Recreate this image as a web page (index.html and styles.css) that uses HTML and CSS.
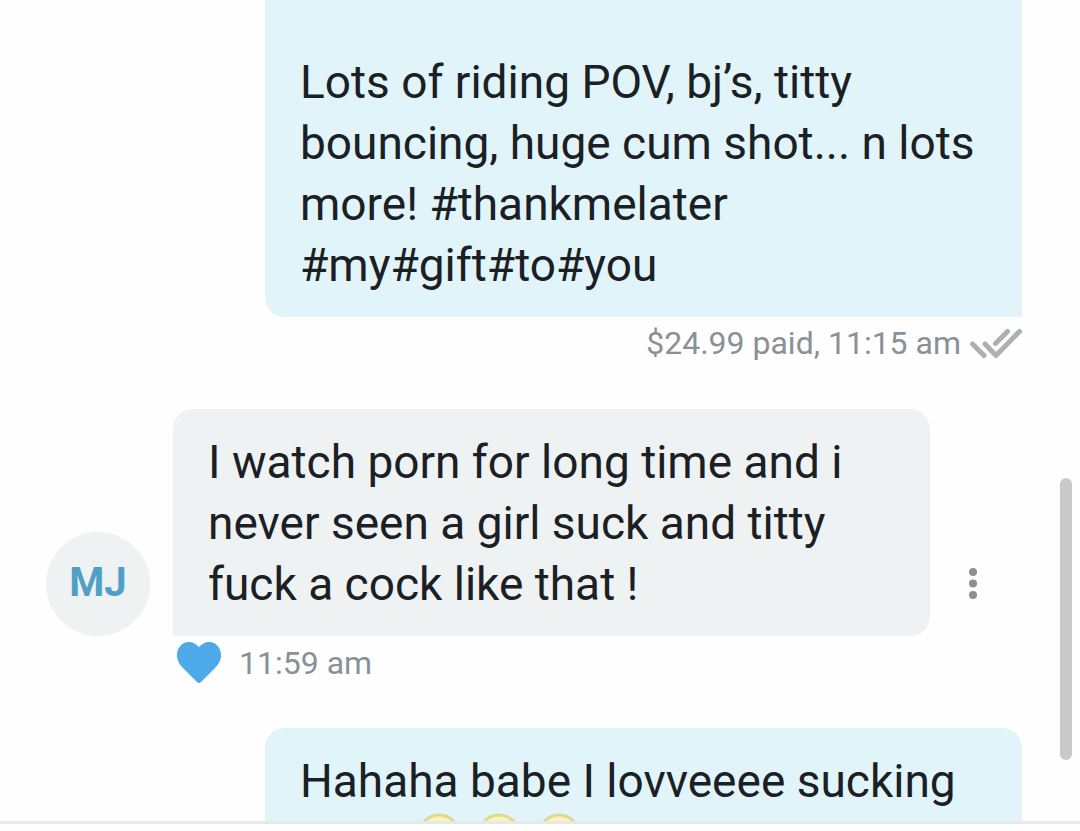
FILE: index.html
```
<!DOCTYPE html>
<html lang="en">
<head>
    <meta charset="UTF-8">
    <meta name="viewport" content="width=device-width, initial-scale=1.0">
    <title>Messages</title>
    <link rel="stylesheet" href="styles.css">
</head>
<body>
    <main class="chat">
        <div class="message message-out">
            <p class="bubble bubble-out bubble-continued">Lots of riding POV, bj’s, titty<br>bouncing, huge cum shot... n lots<br>more! #thankmelater<br>#my#gift#to#you</p>
            <div class="meta">
                <span>$24.99 paid, 11:15 am</span>
                <svg class="checks" viewBox="0 0 52 30" aria-label="Read">
                    <path d="M2.500 16l11.500 11.500M15 16l11 11.500L49.500 3.500M25.500 15.500L37.500 3.500"/>
                </svg>
            </div>
        </div>

        <div class="message message-in">
            <div class="row">
                <div class="avatar">MJ</div>
                <p class="bubble bubble-in">I watch porn for long time and i<br>never seen a girl suck and titty<br>fuck a cock like that !</p>
                <button class="more" type="button" aria-label="More options">
                    <svg viewBox="0 0 10 32">
                        <circle cx="5" cy="4" r="4"/>
                        <circle cx="5" cy="15.500" r="4"/>
                        <circle cx="5" cy="27" r="4"/>
                    </svg>
                </button>
            </div>
            <div class="meta">
                <button class="like" type="button" aria-label="Like">
                    <svg viewBox="0 0 44 42">
                        <path d="M22 5C18 1 15 0 12 0C5 0 0 6 0 13C0 19 3 23 7 27L20 40Q22 42 24 40L37 27C41 23 44 19 44 13C44 6 39 0 32 0C29 0 26 1 22 5Z"/>
                    </svg>
                </button>
                <span>11:59 am</span>
            </div>
        </div>

        <div class="message message-out">
            <div class="bubble bubble-out">
                <p>Hahaha babe I lovveeee sucking</p>
                <div class="emojis">
                    <svg viewBox="0 0 44 44"><circle cx="22" cy="22" r="20"/></svg>
                    <svg viewBox="0 0 44 44"><circle cx="22" cy="22" r="20"/></svg>
                    <svg viewBox="0 0 44 44"><circle cx="22" cy="22" r="20"/></svg>
                </div>
            </div>
        </div>

        <div class="scroll-thumb"></div>
    </main>
    <footer class="composer"></footer>
</body>
</html>
```

FILE: styles.css
```
* { margin: 0; padding: 0; box-sizing: border-box; }
body {
    height: 100vh;
    display: flex;
    flex-direction: column;
    overflow: hidden;
    background: #fefefe;
    color: #1a2024;
    font-family: Roboto, sans-serif;
    font-size: 46px;
    line-height: 61px;
}
button {
    border: 0;
    background: none;
    cursor: pointer;
}
svg { display: block; }
.chat {
    position: relative;
    flex: 1;
    min-height: 0;
    overflow: hidden;
    padding: 0 58px 0 46px;
}
.message {
    display: flex;
    flex-direction: column;
    margin-bottom: 40px;
}
.message-out { align-items: flex-end; }
.bubble {
    width: 757px;
    max-width: 100%;
    padding: 23px 35px 21px;
}
.bubble-out {
    background: #e1f4fa;
    border-radius: 20px 20px 0 20px;
}
.bubble-in {
    background: #eef2f3;
    border-radius: 20px 20px 20px 0;
}
/* upper part is scrolled out of view */
.bubble-continued {
    padding-top: 52px;
    border-top-left-radius: 0;
    border-top-right-radius: 0;
}
.row {
    display: flex;
    align-items: flex-end;
}
.avatar {
    width: 104px;
    height: 104px;
    margin-right: 23px;
    flex-shrink: 0;
    border-radius: 50%;
    background: #eef2f3;
    color: #509fc9;
    font-size: 40px;
    font-weight: 700;
    line-height: 102px;
    text-align: center;
}
.more {
    height: 104px;
    padding: 0 38px;
    flex-shrink: 0;
}
.more svg {
    width: 10px;
    height: 32px;
    fill: #8a9196;
}
.meta {
    display: flex;
    align-items: center;
    gap: 9px;
    height: 52px;
    color: #8a9196;
    font-size: 32px;
    line-height: 52px;
}
.checks {
    width: 52px;
    height: 30px;
    fill: none;
    stroke: #adb0b2;
    stroke-width: 5;
    stroke-linecap: round;
}
.message-in .meta {
    gap: 18px;
    padding: 2px 0 0 131px;
}
.like svg {
    width: 44px;
    height: 42px;
    fill: #4caae8;
}
.emojis {
    display: flex;
    gap: 16px;
    padding: 1px 0 15px 117px;
}
.emojis svg {
    width: 44px;
    height: 44px;
    fill: #fbf4b4;
    stroke: #dfd894;
    stroke-width: 3;
}
.scroll-thumb {
    position: absolute;
    top: 478px;
    right: 8px;
    width: 12px;
    height: 282px;
    border-radius: 6px;
    background: #c9c9c9;
}
.composer {
    height: 10px;
    flex-shrink: 0;
    border-top: 3px solid #e6e8e9;
}
```
